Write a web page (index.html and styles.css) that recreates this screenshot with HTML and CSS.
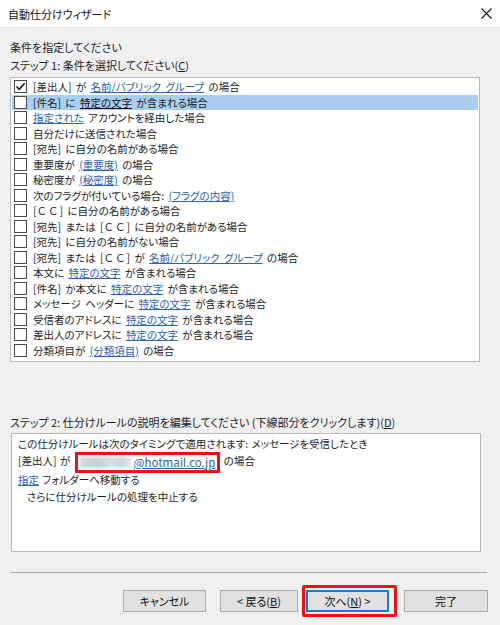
FILE: index.html
```html
<!DOCTYPE html>
<html lang="ja">
<head>
    <meta charset="UTF-8">
    <title>自動仕分けウィザード</title>
    <link rel="stylesheet" href="styles.css">
</head>
<body>

<!-- タイトルバー -->
<div class="titlebar">
    <span class="title">自動仕分けウィザード</span>
    <svg class="close" width="11" height="11" viewBox="0 0 11 11">
        <path d="M0.5 0.5 L10.5 10.5 M10.5 0.5 L0.5 10.5" stroke="#111" stroke-width="1.1" fill="none"/>
    </svg>
</div>

<div class="content">
    <div class="heading">条件を指定してください</div>
    <div class="label step1">ステップ 1: 条件を選択してください(<u>C</u>)</div>

    <!-- 条件の一覧 -->
    <div class="rule-list">
        <div class="row"><span class="check checked"><svg width="11" height="11" viewBox="0 0 11 11"><path d="M1.5 5.5 L4.3 8.3 L9.6 2.2" stroke="#111" stroke-width="1.6" fill="none"/></svg></span>[差出人] が <a>名前/パブリック グループ</a> の場合</div>
        <div class="row selected"><span class="check"></span>[件名] に <a>特定の文字</a> が含まれる場合</div>
        <div class="row"><span class="check"></span><a>指定された</a> アカウントを経由した場合</div>
        <div class="row"><span class="check"></span>自分だけに送信された場合</div>
        <div class="row"><span class="check"></span>[宛先] に自分の名前がある場合</div>
        <div class="row"><span class="check"></span>重要度が <a>(重要度)</a> の場合</div>
        <div class="row"><span class="check"></span>秘密度が <a>(秘密度)</a> の場合</div>
        <div class="row"><span class="check"></span>次のフラグが付いている場合: <a>(フラグの内容)</a></div>
        <div class="row"><span class="check"></span>[<span class="fw">ＣＣ</span>] に自分の名前がある場合</div>
        <div class="row"><span class="check"></span>[宛先] または [<span class="fw">ＣＣ</span>] に自分の名前がある場合</div>
        <div class="row"><span class="check"></span>[宛先] に自分の名前がない場合</div>
        <div class="row"><span class="check"></span>[宛先] または [<span class="fw">ＣＣ</span>] が <a>名前/パブリック グループ</a> の場合</div>
        <div class="row"><span class="check"></span>本文に <a>特定の文字</a> が含まれる場合</div>
        <div class="row"><span class="check"></span>[件名] か本文に <a>特定の文字</a> が含まれる場合</div>
        <div class="row"><span class="check"></span>メッセージ ヘッダーに <a>特定の文字</a> が含まれる場合</div>
        <div class="row"><span class="check"></span>受信者のアドレスに <a>特定の文字</a> が含まれる場合</div>
        <div class="row"><span class="check"></span>差出人のアドレスに <a>特定の文字</a> が含まれる場合</div>
        <div class="row"><span class="check"></span>分類項目が <a>(分類項目)</a> の場合</div>
    </div>

    <div class="label step2">ステップ 2: 仕分けルールの説明を編集してください (下線部分をクリックします)(<u>D</u>)</div>

    <!-- ルールの説明 -->
    <div class="description">
        <div>この仕分けルールは次のタイミングで適用されます: メッセージを受信したとき</div>
        <div>[差出人] が <span class="mark"><span class="hidden-name"></span><a>@hotmail.co.jp</a></span> の場合</div>
        <div><a>指定</a> フォルダーへ移動する</div>
        <div class="indent">さらに仕分けルールの処理を中止する</div>
    </div>

    <div class="separator"></div>

    <!-- ボタン -->
    <div class="buttons">
        <button class="btn cancel">キャンセル</button>
        <button class="btn back">&lt; 戻る(<u>B</u>)</button>
        <button class="btn next">次へ(<u>N</u>) &gt;</button>
        <button class="btn finish">完了</button>
    </div>
</div>

</body>
</html>
```

FILE: styles.css
```css
/* 全体 */
body {
    margin: 0;
    width: 500px;
    height: 625px;
    overflow: hidden;
    background-color: #f0f0f0;
    font-family: "Noto Sans CJK JP", "Noto Sans", sans-serif;
    font-size: 10.5px;
    font-feature-settings: "palt";
    color: #1e1e1e;
}

/* タイトルバー */
.titlebar {
    height: 28px;
    box-sizing: border-box;
    background-color: #fff;
    border-bottom: 1px solid #e6e6e6;
    display: flex;
    align-items: center;
    justify-content: space-between;
    padding: 0 8px 0 8px;
}

.title {
    color: #111;
    font-size: 11px;
}

.content {
    padding: 0 10px;
}

.heading,
.label {
    line-height: 16px;
    font-size: 11px;
}

.heading {
    margin-top: 11px;
}

.step1 {
    margin-top: 2px;
}

/* 条件の一覧 */
.rule-list {
    margin-top: 4px;
    width: 470px;
    height: 285px;
    box-sizing: border-box;
    border: 1px solid #b9b9b9;
    background-color: #fff;
    padding: 1px 1px;
}

.row {
    height: 15.5px;
    display: flex;
    align-items: center;
    white-space: pre;
    word-spacing: 2px;
}

.row.selected {
    background-color: #a8cff1;
}

.check {
    width: 11px;
    height: 11px;
    border: 1px solid #4a4a4a;
    background-color: #fff;
    margin: 0 6px 0 2px;
    flex-shrink: 0;
    display: flex;
}

/* 全角の C は詰めない */
.fw {
    font-feature-settings: normal;
    letter-spacing: 1px;
}

a {
    color: #2c62ad;
    text-decoration: underline;
}

.selected a {
    color: #111;
}

.step2 {
    margin-top: 52px;
}

/* ルールの説明 */
.description {
    margin: 3px 0 0 1px;
    width: 470px;
    height: 119px;
    box-sizing: border-box;
    border: 1px solid #b9b9b9;
    background-color: #fff;
    padding: 1px 6px 0 6px;
    line-height: 17.4px;
    white-space: nowrap;
    word-spacing: 1px;
}

.indent {
    padding-left: 9px;
}

.mark {
    display: inline-block;
    border: 3px solid #ee1111;
    padding: 0 2px 0 2px;
    line-height: 14px;
    vertical-align: middle;
    margin: -3px 0 -2px 1px;
    word-spacing: 0;
}

.mark a {
    font-size: 11.5px;
}

.hidden-name {
    display: inline-block;
    width: 52px;
    height: 11px;
    margin-right: 2px;
    vertical-align: -1px;
    background: linear-gradient(90deg, #d6dae1, #c7ccd5 35%, #dde0e6 60%, #cfd3da 80%, #eceef1);
    filter: blur(1.5px);
}

.separator {
    margin: 20px 0 0 1px;
    width: 476px;
    height: 1px;
    background-color: #a7a7a7;
}

/* ボタン */
.buttons {
    display: flex;
    margin: 17px 0 0 113px;
}

.btn {
    height: 22px;
    box-sizing: border-box;
    border: 1px solid #adadad;
    background-color: #e1e1e1;
    font-family: inherit;
    font-size: 11px;
    font-feature-settings: "palt";
    color: #111;
    padding: 0;
}

.cancel { width: 83px; margin-right: 14px; }
.back { width: 78px; margin-right: 8px; }
.next { width: 83px; margin-right: 15px; }
.finish { width: 84px; }

.next {
    position: relative;
    border: 2px solid #1b7bd4;
}

/* 強調枠 */
.next::after {
    content: "";
    position: absolute;
    top: -7px;
    bottom: -7px;
    left: -6px;
    right: -10px;
    border: 3px solid #ee1111;
    border-radius: 2px;
}
```
